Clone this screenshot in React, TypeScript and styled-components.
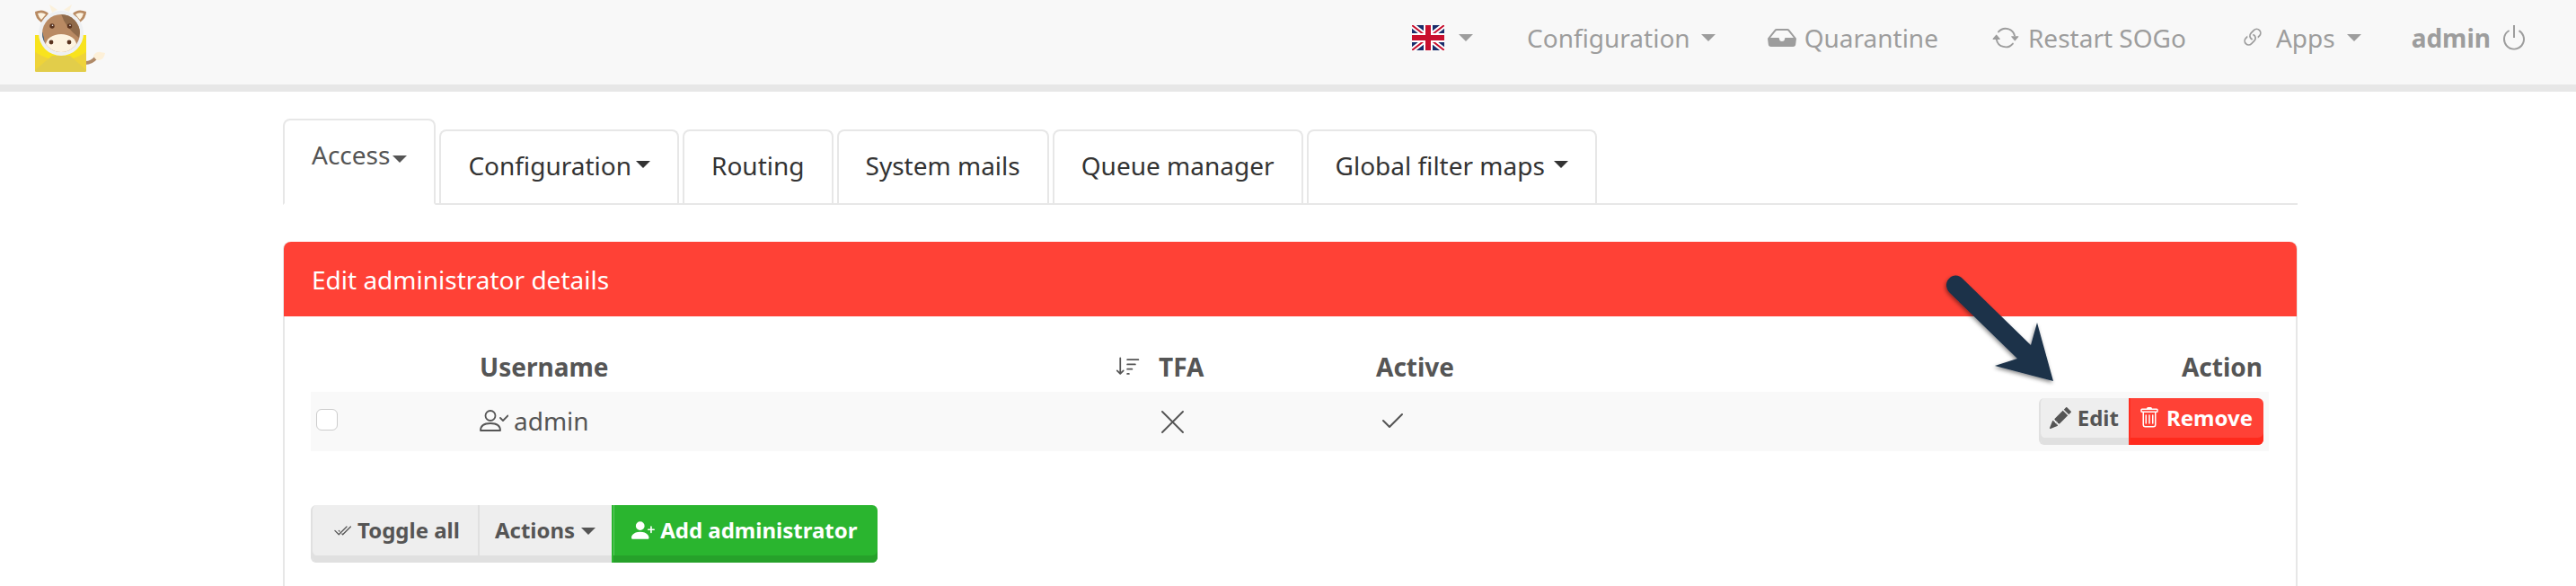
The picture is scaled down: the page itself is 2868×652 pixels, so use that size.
import React from "react";
import styled, { createGlobalStyle } from "styled-components";
import {
  BsArrowRepeat,
  BsCheck2,
  BsCheck2All,
  BsInboxFill,
  BsLink45Deg,
  BsPencilFill,
  BsPersonPlusFill,
  BsPower,
  BsSortDown,
  BsTrash,
} from "react-icons/bs";

const Global = createGlobalStyle`
  html, body { margin: 0; padding: 0; background: #fff; height: 652px; overflow: hidden; }
  body { font-family: "Noto Sans", "Open Sans", sans-serif; font-size: 28px; color: #555; }
  * { box-sizing: border-box; }
`;

const Page = styled.div`
  position: relative;
  width: 2868px;
  height: 652px;
  overflow: hidden;
`;

const Navbar = styled.header`
  height: 102px;
  background: #f8f8f8;
  border-bottom: 8px solid #e7e7e7;
  display: flex;
  align-items: flex-start;
  justify-content: space-between;
  padding-right: 53px;
`;

const NavList = styled.nav`
  display: flex;
  align-items: center;
  height: 84px;
  color: #9d9d9d;
  line-height: 40px;
`;

const NavItem = styled.div<{ $gap?: number; $iconGap?: number }>`
  display: flex;
  align-items: center;
  gap: ${(p) => p.$iconGap ?? 8}px;
  margin-left: ${(p) => p.$gap ?? 0}px;
  white-space: nowrap;
`;

const Caret = styled.span<{ $left?: number; $size?: number; $color?: string }>`
  display: inline-block;
  width: 0;
  height: 0;
  margin-left: ${(p) => p.$left ?? 0}px;
  border-top: ${(p) => p.$size ?? 8}px solid ${(p) => p.$color ?? "currentColor"};
  border-left: ${(p) => p.$size ?? 8}px solid transparent;
  border-right: ${(p) => p.$size ?? 8}px solid transparent;
`;

const Strong = styled.span`
  font-weight: 700;
`;

const Main = styled.main`
  margin-left: 315px;
  width: 2243px;
  padding-top: 30px;
`;

const TabBar = styled.div`
  display: flex;
  align-items: flex-end;
  gap: 4px;
  width: 100%;
  height: 96px;
  border-bottom: 2px solid #e7e7e7;
`;

const Tab = styled.div<{ $active?: boolean }>`
  display: flex;
  align-items: flex-start;
  height: ${(p) => (p.$active ? 96 : 82)}px;
  padding: 18px 30px 0;
  line-height: 40px;
  color: ${(p) => (p.$active ? "#555" : "#333")};
  background: #fff;
  border: 2px solid #e7e7e7;
  border-bottom: ${(p) => (p.$active ? "2px solid #fff" : "none")};
  border-radius: 8px 8px 0 0;
  white-space: nowrap;
  margin-bottom: ${(p) => (p.$active ? -2 : 0)}px;
`;

const TabCaret = styled(Caret)`
  align-self: center;
  margin-top: -24px;
`;

const Panel = styled.section`
  margin-top: 41px;
  height: 400px;
  border: 2px solid #e7e7e7;
  border-top: none;
  border-radius: 8px 8px 0 0;
`;

const PanelHeading = styled.div`
  height: 83px;
  margin: 0 -1px;
  padding: 0 32px 0 31px;
  display: flex;
  align-items: center;
  background: #ff4136;
  color: #fff;
  border-radius: 8px 8px 0 0;
`;

const PanelBody = styled.div`
  padding: 28px 30px 0 29px;
`;

const columns = "188px 756px 242px 300px 1fr";

const HeadRow = styled.div`
  display: grid;
  grid-template-columns: ${columns};
  height: 56px;
  align-items: center;
  font-weight: 700;
  padding-right: 7px;
`;

const UserHead = styled.div`
  display: flex;
  align-items: center;
  justify-content: space-between;
  padding-right: 20px;
`;

const SortIcon = styled(BsSortDown)`
  font-size: 28px;
`;

const RightCell = styled.div`
  display: flex;
  justify-content: flex-end;
`;

const DataRow = styled.div`
  display: grid;
  grid-template-columns: ${columns};
  height: 66px;
  align-items: center;
  background: #f9f9f9;
  padding-right: 6px;
`;

const CheckCell = styled.div`
  padding-left: 6px;
  display: flex;
  margin-top: -4px;
`;

const CheckBox = styled.span`
  display: block;
  width: 24px;
  height: 24px;
  border: 1.5px solid #ccc;
  border-radius: 6px;
  background: #fff;
`;

const UserCell = styled.div`
  display: flex;
  align-items: center;
  gap: 6px;
  margin-top: -2px;
`;

const StateCell = styled.div<{ $left: number }>`
  display: flex;
  padding-left: ${(p) => p.$left}px;
`;

const CheckIcon = styled(BsCheck2)`
  font-size: 32px;
`;

const ButtonGroup = styled.div`
  display: inline-flex;
`;

const tones = {
  gray: { bg: "#eeeeee", low: "#e0e0e0", edge: "#e0e0e0", fg: "#555", extra: "" },
  red: { bg: "#ff4136", low: "#ff2a1d", edge: "#ff2e22", fg: "#fff", extra: "" },
  green: { bg: "#2ab52f", low: "#26a12a", edge: "#2ab52f", fg: "#fff", extra: ", inset 1px 0 0 #5cc960" },
};

const ActionButton = styled.div<{
  $tone: keyof typeof tones;
  $h: number;
  $pad: string;
  $radius: string;
  $iconGap: number;
}>`
  display: flex;
  align-items: flex-start;
  gap: ${(p) => p.$iconGap}px;
  height: ${(p) => p.$h}px;
  padding: ${(p) => p.$pad};
  font-size: 24px;
  line-height: ${(p) => p.$h - 8}px;
  font-weight: 700;
  white-space: nowrap;
  color: ${(p) => tones[p.$tone].fg};
  background: ${(p) => tones[p.$tone].bg};
  border-left: 2px solid ${(p) => tones[p.$tone].edge};
  border-radius: ${(p) => p.$radius};
  box-shadow: inset 0 -8px 0 ${(p) => tones[p.$tone].low}${(p) => tones[p.$tone].extra};
`;

const Footer = styled.div`
  margin-top: 60px;
`;

const Overlay = styled.svg`
  position: absolute;
  left: 2150px;
  top: 290px;
  overflow: visible;
`;

const IconBox = styled.span<{ $size: number; $top: number }>`
  display: flex;
  font-size: ${(p) => p.$size}px;
  margin-top: ${(p) => p.$top}px;
`;

const LogoMark = styled.svg`
  display: block;
  margin-left: 30px;
  flex: none;
`;

const Logo = () => (
  <LogoMark width={90} height={94} viewBox="30 0 90 94">
    <defs>
      <clipPath id="face">
        <circle cx="68" cy="37" r="21" />
      </clipPath>
    </defs>
    <path d="M55 5 L64 11 L58 14 Z" fill="#fbf1dc" />
    <path d="M80 5 L77 13 L71 11 Z" fill="#fbf1dc" />
    <path d="M39 13 Q48 9 54 15 L46 25 Q39 20 39 13 Z" fill="#b88a62" />
    <path d="M42 15 Q47 13 51 16 L46 22 Q43 19 42 15 Z" fill="#fdf3e0" />
    <path d="M96 13 Q87 9 81 15 L89 25 Q96 20 96 13 Z" fill="#b88a62" />
    <path d="M93 15 Q88 13 84 16 L89 22 Q92 19 93 15 Z" fill="#fdf3e0" />
    <path d="M95 70 Q102 70 107 64" stroke="#b08a68" strokeWidth="4" fill="none" />
    <path d="M104 62 Q107 57 112 58 L117 59 Q116 66 110 67 Q106 67 104 62 Z" fill="#fdf0d8" />
    <path d="M39 39 L96 39 L96 78 Q96 80 94 80 L41 80 Q39 80 39 78 Z" fill="#f8e31e" />
    <path d="M39 58 Q68 76 96 58 L96 78 Q96 80 94 80 L41 80 Q39 80 39 78 Z" fill="#eed33a" />
    <path d="M39 78 L58 62 L78 62 L96 78 Q96 80 94 80 L41 80 Q39 80 39 78 Z" fill="#e2cd4a" />
    <circle cx="68" cy="37" r="25" fill="#eef0f2" />
    <g clipPath="url(#face)">
      <rect x="44" y="12" width="48" height="50" fill="#b98a63" />
      <path d="M68 15 Q72 30 88 42 L92 15 Z" fill="#8f6a4a" />
      <path d="M44 28 Q49 38 50 50 L44 50 Z" fill="#2f5c80" />
      <ellipse cx="68" cy="50" rx="17" ry="12" fill="#fdf3e0" />
    </g>
    <circle cx="58" cy="29" r="2.7" fill="#5a3420" />
    <circle cx="77.5" cy="29" r="2.7" fill="#5a3420" />
    <circle cx="58.5" cy="28.3" r="0.8" fill="#fff" />
    <circle cx="78" cy="28.3" r="0.8" fill="#fff" />
    <circle cx="57" cy="47" r="2.4" fill="#5a3420" />
    <circle cx="77" cy="47" r="2.4" fill="#5a3420" />
  </LogoMark>
);

const Flag = () => (
  <svg width={36} height={28} viewBox="0 0 36 28">
    <rect width="36" height="28" fill="#1a2d6b" />
    <path d="M0 0 L36 28 M36 0 L0 28" stroke="#fff" strokeWidth="6" />
    <path d="M0 0 L36 28 M36 0 L0 28" stroke="#c8102e" strokeWidth="2" />
    <path d="M18 0 V28 M0 14 H36" stroke="#fff" strokeWidth="10" />
    <path d="M18 0 V28 M0 14 H36" stroke="#c8102e" strokeWidth="6" />
  </svg>
);

const PersonCheck = () => (
  <svg width={32} height={24} viewBox="0 0 32 24" fill="none" stroke="currentColor" strokeWidth="1.8">
    <circle cx="12" cy="6.5" r="5.5" />
    <path d="M1 23 C1 17 6 15 12 15 C18 15 23 17 23 23 Z" strokeLinejoin="round" />
    <path d="M23 9 L26 12 L31.5 6.5" strokeLinecap="round" strokeLinejoin="round" />
  </svg>
);

const CrossIcon = () => (
  <svg width={25} height={25} viewBox="0 0 25 25" fill="none" stroke="currentColor" strokeWidth="1.9" strokeLinecap="round">
    <path d="M1 1 L24 24 M24 1 L1 24" />
  </svg>
);

const Arrow = () => (
  <Overlay width={160} height={150} viewBox="2150 290 160 150">
    <defs>
      <filter id="arrowShadow" x="-20%" y="-20%" width="140%" height="140%">
        <feDropShadow dx="-1" dy="2" stdDeviation="2" floodColor="#000" floodOpacity="0.45" />
      </filter>
    </defs>
    <g filter="url(#arrowShadow)">
      <path
        d="M2170 310 C2175 305 2181 306 2185 310 L2261 384 L2268 359 L2286 424 L2221 407 L2246 399 L2170 325 C2166 320 2166 314 2170 310 Z"
        fill="#1a3049"
      />
    </g>
  </Overlay>
);

export default function App() {
  return (
    <Page>
      <Global />
      <Navbar>
        <Logo />
        <NavList>
          <NavItem $iconGap={16}>
            <Flag />
            <Caret />
          </NavItem>
          <NavItem $gap={60} $iconGap={12}>
            Configuration
            <Caret />
          </NavItem>
          <NavItem $gap={58} $iconGap={9}>
            <BsInboxFill size={32} />
            Quarantine
          </NavItem>
          <NavItem $gap={60} $iconGap={10}>
            <BsArrowRepeat size={30} />
            Restart SOGo
          </NavItem>
          <NavItem $gap={60} $iconGap={12}>
            <BsLink45Deg size={28} />
            Apps
            <Caret $left={1} />
          </NavItem>
          <NavItem $gap={56} $iconGap={10}>
            <Strong>admin</Strong>
            <BsPower size={32} />
          </NavItem>
        </NavList>
      </Navbar>
      <Main>
        <TabBar>
          <Tab $active>
            Access
            <TabCaret $left={3} />
          </Tab>
          <Tab>
            Configuration
            <TabCaret $left={5} />
          </Tab>
          <Tab>Routing</Tab>
          <Tab>System mails</Tab>
          <Tab>Queue manager</Tab>
          <Tab>
            Global filter maps
            <TabCaret $left={10} />
          </Tab>
        </TabBar>
        <Panel>
          <PanelHeading>Edit administrator details</PanelHeading>
          <PanelBody>
            <HeadRow>
              <span />
              <UserHead>
                Username
                <SortIcon />
              </UserHead>
              <span>TFA</span>
              <span>Active</span>
              <RightCell>Action</RightCell>
            </HeadRow>
            <DataRow>
              <CheckCell>
                <CheckBox />
              </CheckCell>
              <UserCell>
                <PersonCheck />
                admin
              </UserCell>
              <StateCell $left={3}>
                <CrossIcon />
              </StateCell>
              <StateCell $left={2}>
                <CheckIcon />
              </StateCell>
              <RightCell>
                <ActionButton $tone="gray" $h={52} $pad="0 11px 0 10px" $radius="6px 0 0 6px" $iconGap={7}>
                  <IconBox $size={24} $top={10}>
                    <BsPencilFill />
                  </IconBox>
                  Edit
                </ActionButton>
                <ActionButton $tone="red" $h={52} $pad="0 12px 0 9px" $radius="0 6px 6px 0" $iconGap={7}>
                  <IconBox $size={24} $top={10}>
                    <BsTrash />
                  </IconBox>
                  Remove
                </ActionButton>
              </RightCell>
            </DataRow>
            <Footer>
              <ButtonGroup>
                <ActionButton $tone="gray" $h={64} $pad="0 20px 0 23px" $radius="6px 0 0 6px" $iconGap={7}>
                  <IconBox $size={20} $top={19}>
                    <BsCheck2All />
                  </IconBox>
                  Toggle all
                </ActionButton>
                <ActionButton $tone="gray" $h={64} $pad="0 18px 0 17px" $radius="0" $iconGap={7}>
                  Actions
                  <IconBox $size={16} $top={25}>
                    <Caret />
                  </IconBox>
                </ActionButton>
                <ActionButton $tone="green" $h={64} $pad="0 23px 0 20px" $radius="0 6px 6px 0" $iconGap={6}>
                  <IconBox $size={26} $top={15}>
                    <BsPersonPlusFill />
                  </IconBox>
                  Add administrator
                </ActionButton>
              </ButtonGroup>
            </Footer>
          </PanelBody>
        </Panel>
      </Main>
      <Arrow />
    </Page>
  );
}
